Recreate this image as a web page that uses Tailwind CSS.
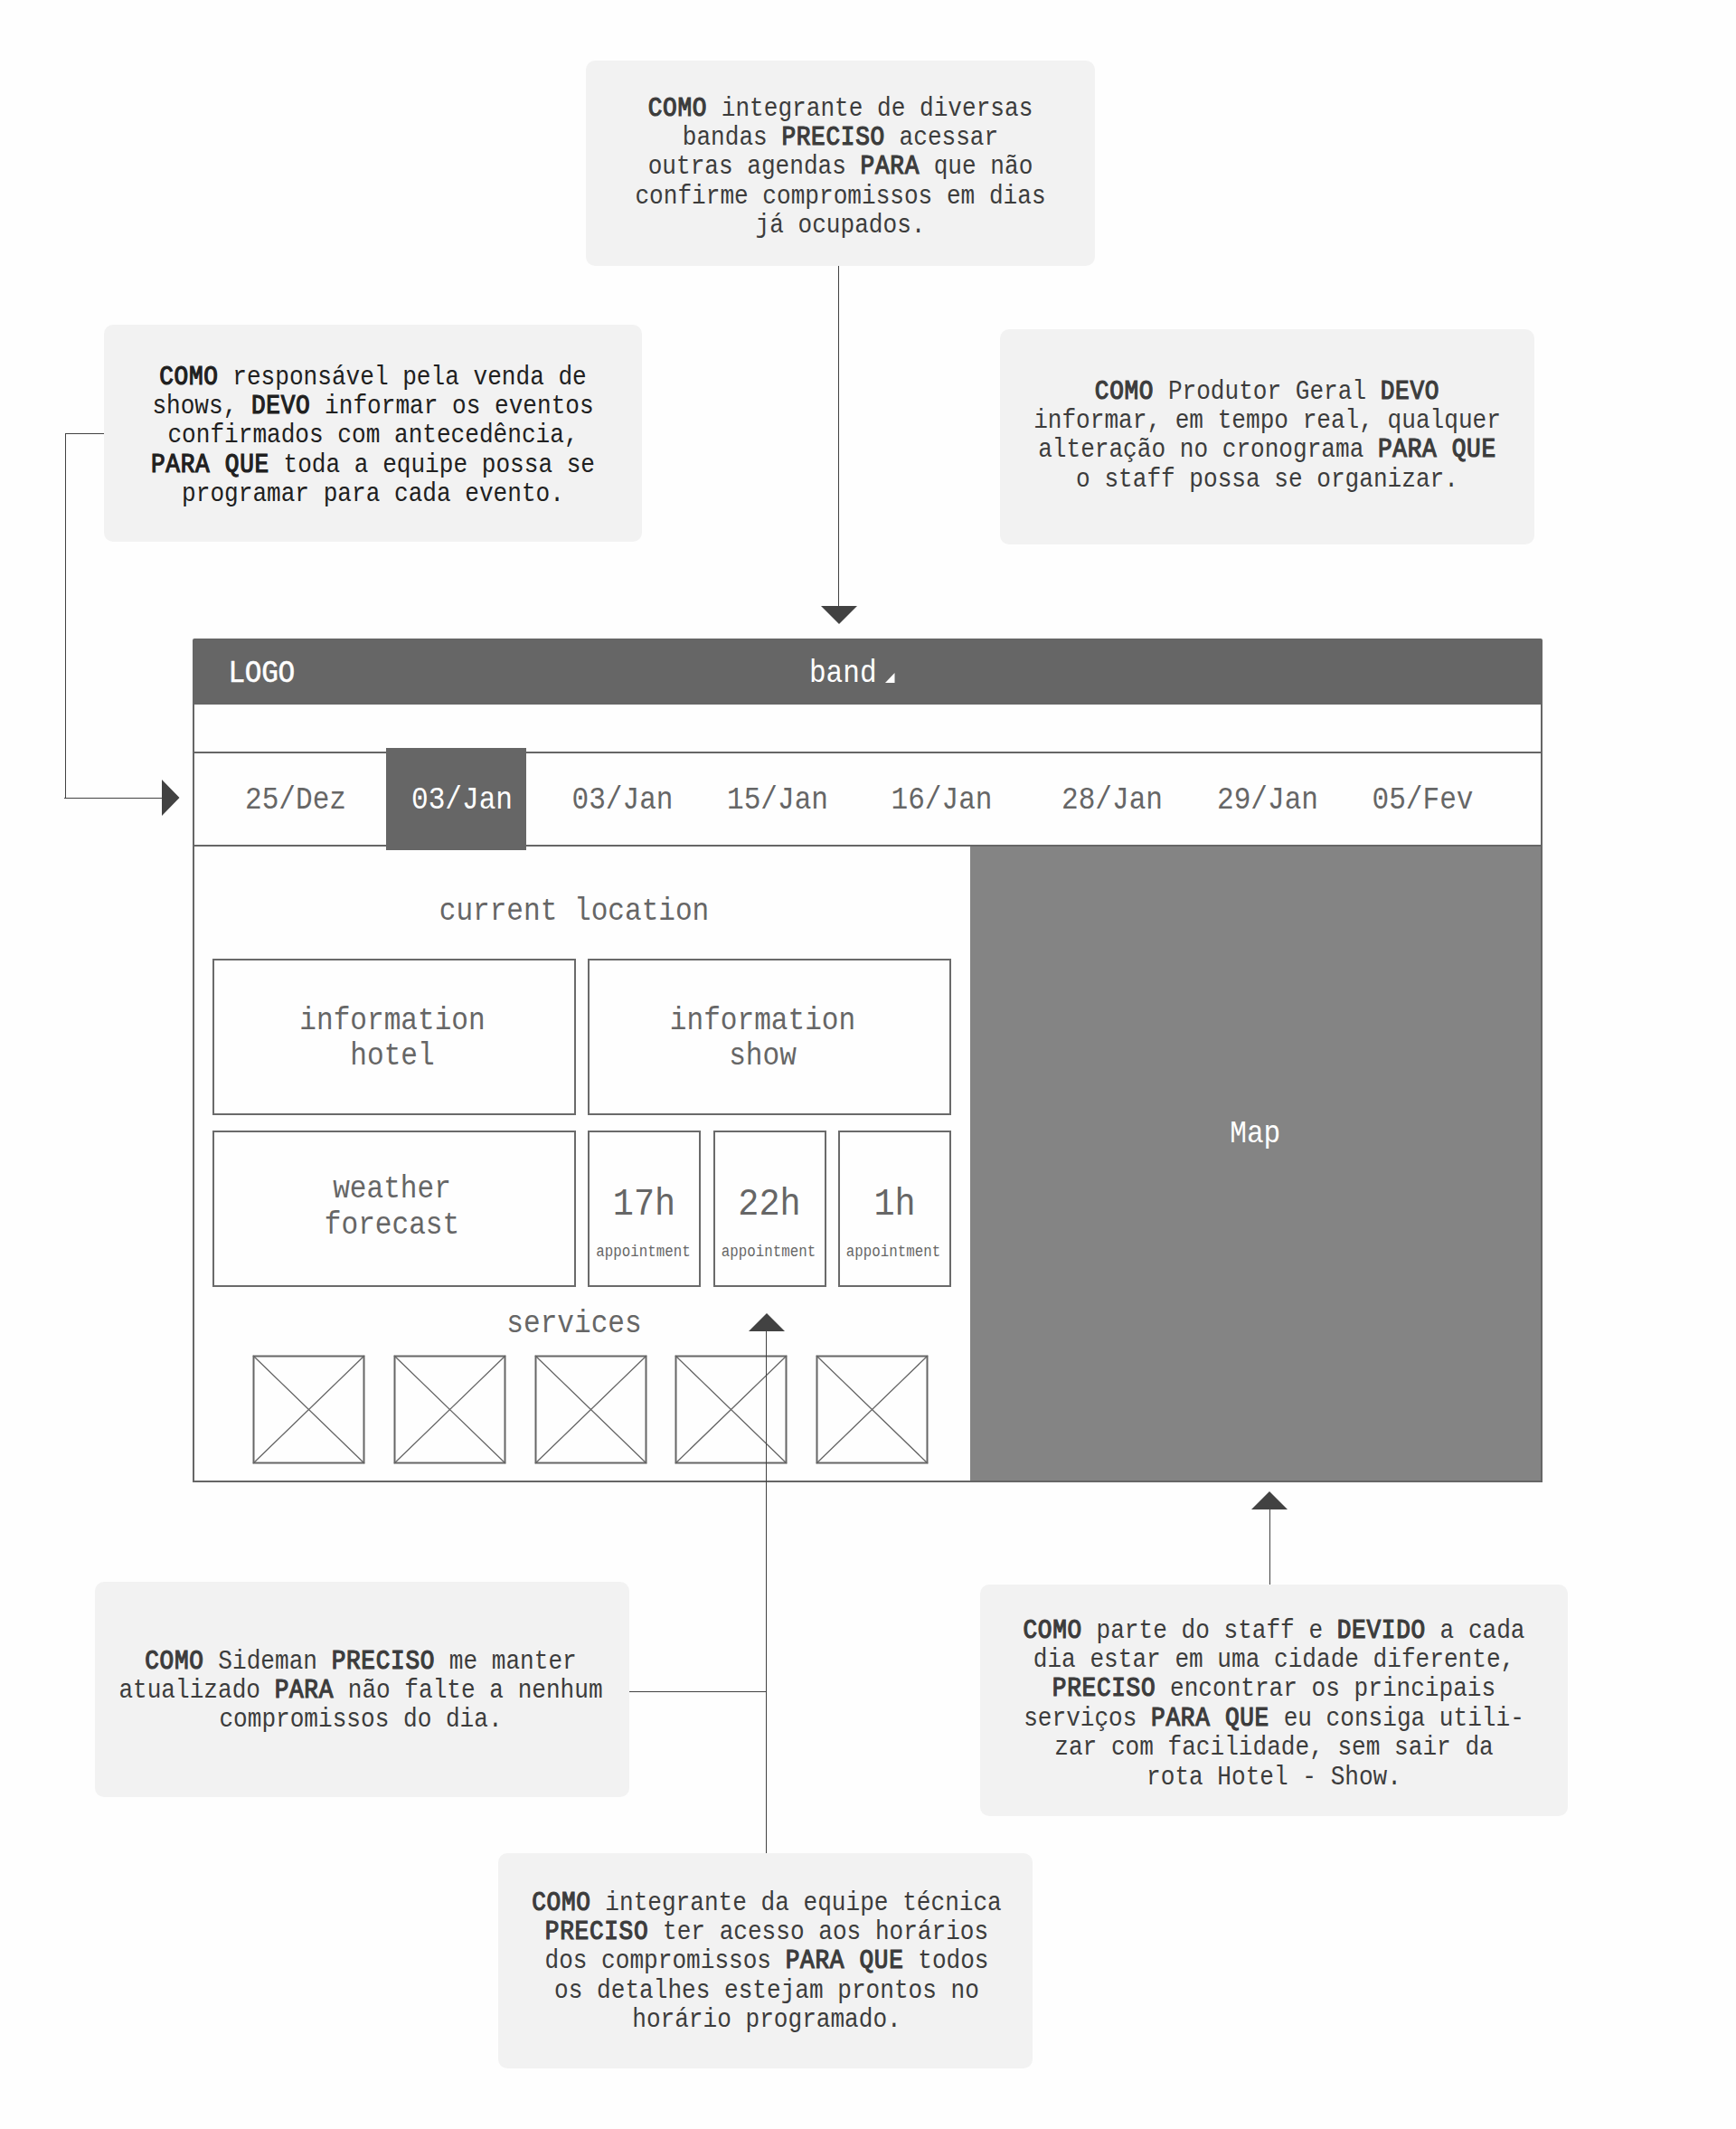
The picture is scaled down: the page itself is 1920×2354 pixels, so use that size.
<!DOCTYPE html>
<html lang="pt-BR">
<head>
<meta charset="utf-8">
<title>Wireframe</title>
<script src="https://cdn.jsdelivr.net/npm/@tailwindcss/browser@4"></script>
</head>
<body class="bg-[#fefefe]">
<main class="relative h-[2354px] w-[1920px] overflow-hidden font-['Liberation_Mono',monospace] text-[26.1px] leading-[29.1px] whitespace-nowrap text-center text-[#3c3c3c] [&_b]:font-normal [&_b]:tracking-[0.7px] [&_b]:[-webkit-text-stroke:1.1px_currentColor]">

  <!-- User stories -->
  <section class="absolute left-[648px] top-[67px] h-[227px] w-[563px] rounded-[10px] bg-[#f2f2f2] pt-[37px]">
    <p class="origin-top scale-y-[1.12]"><b>COMO</b> integrante de diversas<br>bandas <b>PRECISO</b> acessar<br>outras agendas <b>PARA</b> que não<br>confirme compromissos em dias<br>já ocupados.</p>
  </section>
  <section class="absolute left-[115px] top-[359px] h-[240px] w-[595px] rounded-[10px] bg-[#f2f2f2] pt-[42px] text-[#202020]">
    <p class="origin-top scale-y-[1.12]"><b>COMO</b> responsável pela venda de<br>shows, <b>DEVO</b> informar os eventos<br>confirmados com antecedência,<br><b>PARA QUE</b> toda a equipe possa se<br>programar para cada evento.</p>
  </section>
  <section class="absolute left-[1106px] top-[364px] h-[238px] w-[591px] rounded-[10px] bg-[#f2f2f2] pt-[53px]">
    <p class="origin-top scale-y-[1.12]"><b>COMO</b> Produtor Geral <b>DEVO</b><br>informar, em tempo real, qualquer<br>alteração no cronograma <b>PARA QUE</b><br>o staff possa se organizar.</p>
  </section>
  <section class="absolute left-[105px] top-[1749px] h-[238px] w-[591px] rounded-[10px] bg-[#f2f2f2] pt-[72px] pr-[3px]">
    <p class="origin-top scale-y-[1.12]"><b>COMO</b> Sideman <b>PRECISO</b> me manter<br>atualizado <b>PARA</b> não falte a nenhum<br>compromissos do dia.</p>
  </section>
  <section class="absolute left-[1084px] top-[1752px] h-[256px] w-[650px] rounded-[10px] bg-[#f2f2f2] pt-[35px]">
    <p class="origin-top scale-y-[1.12]"><b>COMO</b> parte do staff e <b>DEVIDO</b> a cada<br>dia estar em uma cidade diferente,<br><b>PRECISO</b> encontrar os principais<br>serviços <b>PARA QUE</b> eu consiga utili-<br>zar com facilidade, sem sair da<br>rota Hotel - Show.</p>
  </section>
  <section class="absolute left-[551px] top-[2049px] h-[238px] w-[591px] rounded-[10px] bg-[#f2f2f2] pt-[39px] pl-[3px]">
    <p class="origin-top scale-y-[1.12]"><b>COMO</b> integrante da equipe técnica<br><b>PRECISO</b> ter acesso aos horários<br>dos compromissos <b>PARA QUE</b> todos<br>os detalhes estejam prontos no<br>horário programado.</p>
  </section>

  <!-- App frame -->
  <div class="absolute left-[213px] top-[706px] flex h-[933px] w-[1493px] flex-col rounded-t-[2px] border-2 border-[#666] text-[31.1px] leading-[35px] text-[#666]">
    <header class="flex h-[71px] shrink-0 bg-[#666] pt-[17px] text-white">
      <div class="ml-[37.5px] origin-top scale-y-[1.12] tracking-[-0.3px] [-webkit-text-stroke:0.5px_white]">LOGO</div>
      <div class="ml-[569px] origin-top scale-y-[1.12]">band</div>
      <svg class="mt-[19px] ml-[9.5px] h-[11px] w-[11px]" viewBox="0 0 11 11"><path d="M0 11L10.500 0V11Z" fill="#fff"/></svg>
    </header>
    <div class="h-[52px] shrink-0"></div>
    <nav class="flex h-[105px] shrink-0 border-y-2 border-[#666]">
      <div class="mt-[32px] ml-[56px] w-[112px] origin-top scale-y-[1.12]">25/Dez</div>
      <div class="-mt-[6px] ml-[44px] h-[113px] w-[155px] bg-[#666] pt-[38px] pl-[13px] text-white"><div class="origin-top scale-y-[1.12]">03/Jan</div></div>
      <div class="mt-[32px] ml-[50.5px] w-[112px] origin-top scale-y-[1.12]">03/Jan</div>
      <div class="mt-[32px] ml-[59.5px] w-[112px] origin-top scale-y-[1.12]">15/Jan</div>
      <div class="mt-[32px] ml-[69.500px] w-[112px] origin-top scale-y-[1.12]">16/Jan</div>
      <div class="mt-[32px] ml-[76.5px] w-[112px] origin-top scale-y-[1.12]">28/Jan</div>
      <div class="mt-[32px] ml-[60px] w-[112px] origin-top scale-y-[1.12]">29/Jan</div>
      <div class="mt-[32px] ml-[59.5px] w-[112px] origin-top scale-y-[1.12]">05/Fev</div>
    </nav>
    <div class="flex h-[701px]">
      <div class="w-[857.5px] shrink-0 pl-[20px]">
        <div class="w-[817px]">
          <div class="h-[124px] pt-[52px] pr-[17px]"><h2 class="origin-top scale-y-[1.12]">current location</h2></div>
          <div class="grid grid-cols-[402px_402px] grid-rows-[173px_173px] gap-x-[13px] gap-y-[17px]">
            <div class="border-2 border-[#6a6a6a] pt-[47px] pr-[4px]"><p class="origin-top scale-y-[1.12]">information<br>hotel</p></div>
            <div class="border-2 border-[#6a6a6a] pt-[47px] pr-[15px]"><p class="origin-top scale-y-[1.12]">information<br>show</p></div>
            <div class="border-2 border-[#6a6a6a] pt-[43px] pr-[5px]"><p class="origin-top scale-y-[1.12] leading-[35.5px]">weather<br>forecast</p></div>
            <div class="grid grid-cols-[125px_125px_125px] justify-between">
              <div class="border-2 border-[#6a6a6a] pt-[56px]">
                <p class="origin-top scale-y-[1.12] text-[38.5px] leading-[42px]">17h</p>
                <p class="mt-[24px] origin-top scale-y-[1.12] pr-[2px] text-[15.8px] leading-[18px]">appointment</p>
              </div>
              <div class="border-2 border-[#6a6a6a] pt-[56px]">
                <p class="origin-top scale-y-[1.12] text-[38.5px] leading-[42px]">22h</p>
                <p class="mt-[24px] origin-top scale-y-[1.12] pr-[2px] text-[15.8px] leading-[18px]">appointment</p>
              </div>
              <div class="border-2 border-[#6a6a6a] pt-[56px]">
                <p class="origin-top scale-y-[1.12] text-[38.5px] leading-[42px]">1h</p>
                <p class="mt-[24px] origin-top scale-y-[1.12] pr-[3px] text-[15.8px] leading-[18px]">appointment</p>
              </div>
            </div>
          </div>
          <h2 class="mt-[21px] origin-top scale-y-[1.12] pr-[17px]">services</h2>
          <div class="mt-[19px] ml-[44px] flex w-[748px] justify-between">
            <svg class="h-[121px] w-[125px]" viewBox="0 0 125 121" fill="none" stroke="#666"><path d="M1.500 1.500H123.500V119.500H1.500Z" stroke-width="2"/><path d="M1 1L124 120M124 1L1 120" stroke-width="1.300"/></svg>
            <svg class="h-[121px] w-[125px]" viewBox="0 0 125 121" fill="none" stroke="#666"><path d="M1.500 1.500H123.500V119.500H1.500Z" stroke-width="2"/><path d="M1 1L124 120M124 1L1 120" stroke-width="1.300"/></svg>
            <svg class="h-[121px] w-[125px]" viewBox="0 0 125 121" fill="none" stroke="#666"><path d="M1.500 1.500H123.500V119.500H1.500Z" stroke-width="2"/><path d="M1 1L124 120M124 1L1 120" stroke-width="1.300"/></svg>
            <svg class="h-[121px] w-[125px]" viewBox="0 0 125 121" fill="none" stroke="#666"><path d="M1.500 1.500H123.500V119.500H1.500Z" stroke-width="2"/><path d="M1 1L124 120M124 1L1 120" stroke-width="1.300"/></svg>
            <svg class="h-[121px] w-[125px]" viewBox="0 0 125 121" fill="none" stroke="#666"><path d="M1.500 1.500H123.500V119.500H1.500Z" stroke-width="2"/><path d="M1 1L124 120M124 1L1 120" stroke-width="1.300"/></svg>
          </div>
        </div>
      </div>
      <div class="flex-1 bg-[#848484] pt-[298px] text-white"><div class="origin-top scale-y-[1.12]">Map</div></div>
    </div>
  </div>

  <!-- Connectors -->
  <svg class="absolute inset-0 h-[2354px] w-[1920px]" viewBox="0 0 1920 2354" fill="#424242">
    <path d="M927 294H928V670H927ZM908 670H948L928 690Z"/>
    <path d="M72 479H115V480H73V882H179V883H71V882H72ZM179 862L198.500 882L179 902Z"/>
    <path d="M847 1472H848V2049H847ZM828 1472H868L848 1452ZM696 1870H847V1871H696Z"/>
    <path d="M1404 1669H1405V1752H1404ZM1384 1669H1424L1404 1649Z"/>
  </svg>
</main>
</body>
</html>
